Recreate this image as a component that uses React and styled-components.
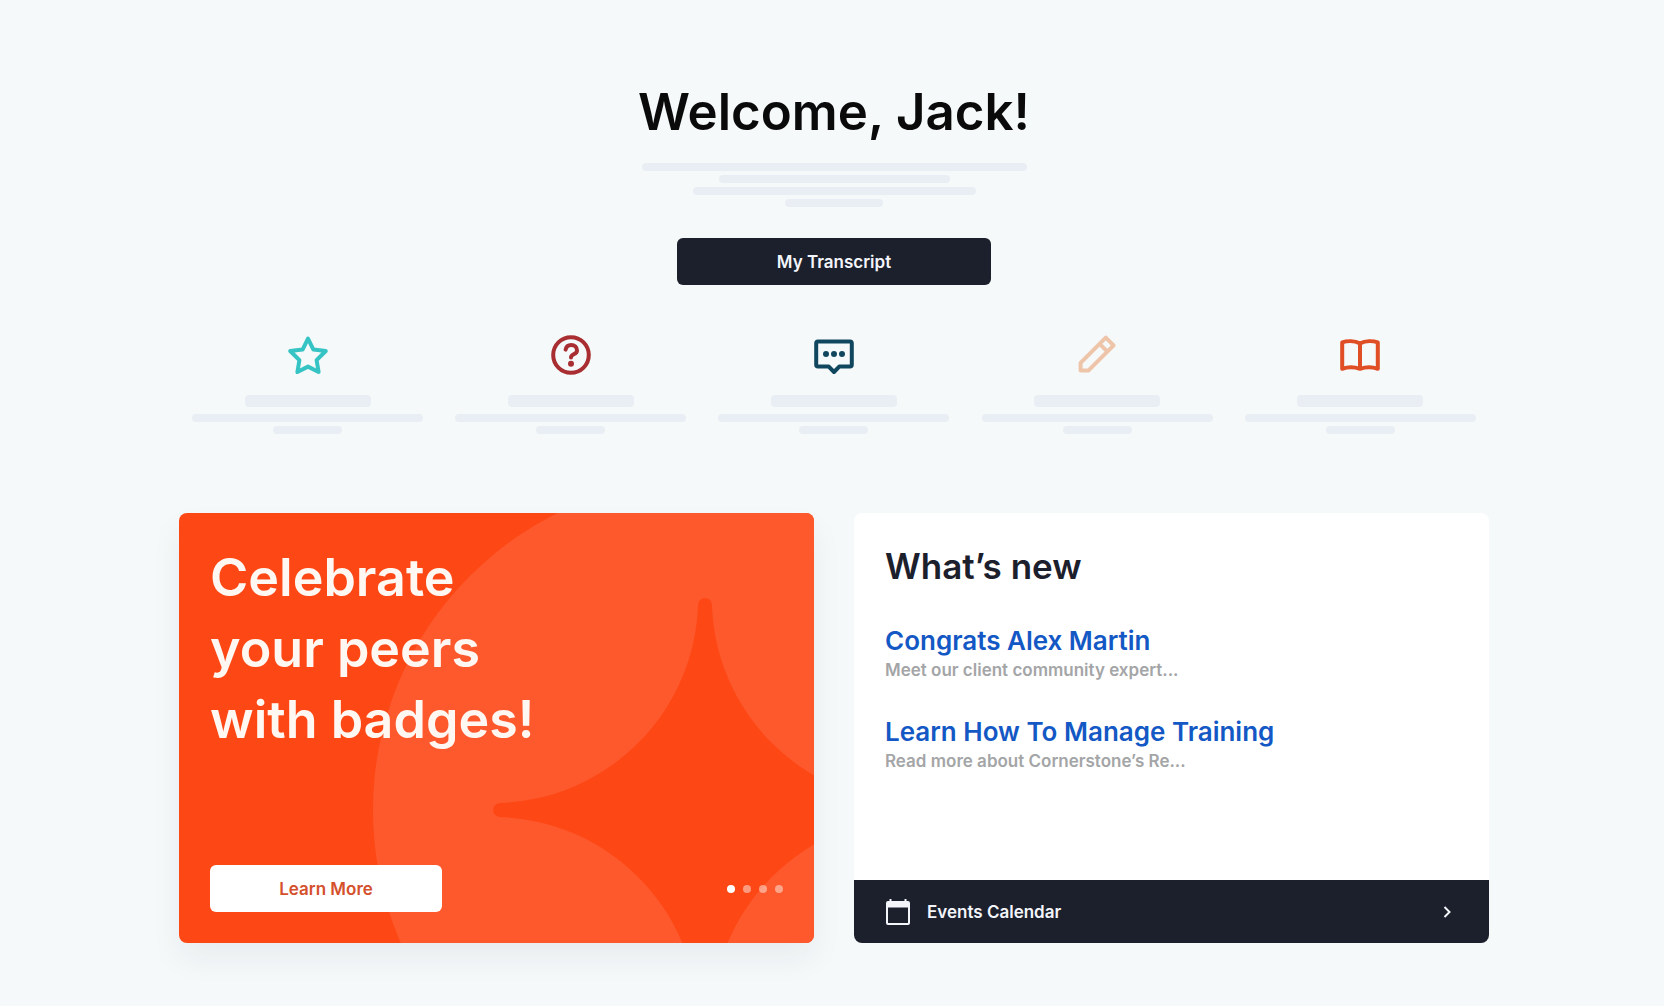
import React from 'react';
import styled, { createGlobalStyle } from 'styled-components';

const shortcuts = [
  {
    name: 'Favorites',
    color: '#35c4c3',
    icon: (
      <path d="M12 3.8L14.7 9.3L20.9 10L16.3 14.6L17.3 20.5L12 17.8L6.7 20.5L7.7 14.6L3.1 10L9.3 9.3Z" />
    ),
  },
  {
    name: 'Help',
    color: '#a82e31',
    icon: (
      <>
        <circle cx="12" cy="12" r="8.9" />
        <path d="M9.3 9.3C9.6 7.8 10.7 7 12.1 7C13.8 7 15 8.1 15 9.7C15 11.8 12 11.5 12 13.2" />
        <circle className="dot" cx="12" cy="16.4" r="1.5" />
      </>
    ),
  },
  {
    name: 'Messages',
    color: '#11475e',
    icon: (
      <>
        <path d="M4 5.2H20Q20.9 5.2 20.9 6.1V16.9Q20.9 17.8 20 17.8H14.6L12 20.5L9.4 17.8H4Q3.1 17.8 3.1 16.9V6.1Q3.1 5.2 4 5.2Z" />
        <circle className="dot" cx="8" cy="11.5" r="1.5" />
        <circle className="dot" cx="12" cy="11.5" r="1.5" />
        <circle className="dot" cx="16" cy="11.5" r="1.5" />
      </>
    ),
  },
  {
    name: 'Notes',
    color: '#eec5a9',
    icon: (
      <path d="M3.8 15.9L16.4 3.3L20.3 7.2L7.8 19.7H3.8ZM13.3 6.4L17.2 10.3" />
    ),
  },
  {
    name: 'Library',
    color: '#e04e26',
    icon: (
      <path d="M3.1 5.7C5.6 4.9 9.4 4.9 12 6.2C14.6 4.9 18.4 4.9 20.9 5.7V18.9C18 17.9 15 17.9 12 18.9C9 17.9 6 17.9 3.1 18.9ZM12 6.2V18.9" />
    ),
  },
];

const news = [
  { title: 'Congrats Alex Martin', text: 'Meet our client community expert...' },
  {
    title: 'Learn How To Manage Training',
    text: 'Read more about Cornerstone’s Re...',
  },
];

const App = () => {
  return (
    <>
      <GlobalStyle />
      <Page>
        <Hero>
          <HeroTitle>Welcome, Jack!</HeroTitle>
          <Lines>
            <Bar $width={385} />
            <Bar $width={231} />
            <Bar $width={283} />
            <Bar $width={98} />
          </Lines>
          <Button $width={314}>My Transcript</Button>
        </Hero>

        <Shortcuts>
          {shortcuts.map(item => (
            <Shortcut key={item.name} href="#" aria-label={item.name}>
              <ShortcutIcon viewBox="0 0 24 24" $color={item.color}>
                {item.icon}
              </ShortcutIcon>
              <Bar $width={126} $height={12} />
              <Lines>
                <Bar $width={231} />
                <Bar $width={69} />
              </Lines>
            </Shortcut>
          ))}
        </Shortcuts>

        <Cards>
          <Banner>
            <BannerArt viewBox="0 0 635 430" preserveAspectRatio="xMaxYMax slice">
              <circle cx="525" cy="297" r="331" fill="#fe592d" />
              <path
                transform="translate(526 297)"
                fill="#fd4816"
                d="M-7 -205A7 7 0 0 1 7 -205A205 205 0 0 0 205 -7A7 7 0 0 1 205 7A205 205 0 0 0 7 205A7 7 0 0 1 -7 205A205 205 0 0 0 -205 7A7 7 0 0 1 -205 -7A205 205 0 0 0 -7 -205Z"
              />
            </BannerArt>
            <BannerTitle>
              Celebrate
              <br />
              your peers
              <br />
              with badges!
            </BannerTitle>
            <BannerFooter>
              <Button $light $width={232}>
                Learn More
              </Button>
              <Dots>
                <Dot $active aria-label="Slide 1" />
                <Dot aria-label="Slide 2" />
                <Dot aria-label="Slide 3" />
                <Dot aria-label="Slide 4" />
              </Dots>
            </BannerFooter>
          </Banner>

          <News>
            <NewsBody>
              <NewsTitle>What’s new</NewsTitle>
              {news.map(item => (
                <NewsItem key={item.title}>
                  <NewsLink href="#">{item.title}</NewsLink>
                  <NewsText>{item.text}</NewsText>
                </NewsItem>
              ))}
            </NewsBody>
            <EventsLink href="#">
              <CalendarIcon viewBox="0 0 24 26">
                <path
                  fillRule="evenodd"
                  d="M3.5 0H5.5V2H18.5V0H20.5V2H22Q24 2 24 4V24Q24 26 22 26H2Q0 26 0 24V4Q0 2 2 2H3.5ZM2 8.5V24H22V8.5Z"
                />
              </CalendarIcon>
              Events Calendar
              <Chevron viewBox="0 0 8 12">
                <path d="M1.5 1L6.5 6L1.5 11" />
              </Chevron>
            </EventsLink>
          </News>
        </Cards>
      </Page>
    </>
  );
};

const GlobalStyle = createGlobalStyle`
  * {
    box-sizing: border-box;
  }
  body {
    margin: 0;
    background: #f5f9fa;
    color: #1c202c;
    font-family: Inter, 'Liberation Sans', sans-serif;
  }
  h1, h2, p {
    margin: 0;
  }
  a {
    text-decoration: none;
  }
`;

const Page = styled.main`
  padding: 80px 175px 60px 179px;
`;

const Hero = styled.header`
  display: flex;
  flex-direction: column;
  align-items: center;
`;

const HeroTitle = styled.h1`
  margin-bottom: 19px;
  color: #0a0a0b;
  font-size: 51px;
  font-weight: 600;
  line-height: 64px;
`;

const Lines = styled.div`
  display: flex;
  flex-direction: column;
  align-items: center;
  gap: 4px;
  width: 100%;
`;

const Bar = styled.div`
  width: ${props => props.$width}px;
  max-width: 100%;
  height: ${props => props.$height || 8}px;
  border-radius: 4px;
  background: #e9eef4;
`;

const Button = styled.button`
  width: ${props => props.$width}px;
  height: 47px;
  border: 0;
  border-radius: 6px;
  background: ${props => (props.$light ? '#fff' : '#1c202c')};
  color: ${props => (props.$light ? '#d5502c' : '#f3f5fb')};
  font-family: inherit;
  font-size: 17px;
  font-weight: 600;
  cursor: pointer;

  ${Hero} & {
    margin-top: 31px;
  }
`;

const Shortcuts = styled.nav`
  display: grid;
  grid-template-columns: repeat(5, 1fr);
  gap: 32px;
  margin: 46px 13px 0;
`;

const Shortcut = styled.a`
  display: flex;
  flex-direction: column;
  align-items: center;
  gap: 7px;
`;

const ShortcutIcon = styled.svg`
  width: 48px;
  height: 48px;
  margin-bottom: 9px;
  fill: none;
  stroke: ${props => props.$color};
  stroke-width: 2;
  stroke-linecap: round;
  stroke-linejoin: round;

  .dot {
    fill: ${props => props.$color};
    stroke: none;
  }
`;

const Cards = styled.section`
  display: grid;
  grid-template-columns: 1fr 1fr;
  gap: 40px;
  margin-top: 79px;
`;

const Banner = styled.article`
  position: relative;
  display: flex;
  flex-direction: column;
  justify-content: space-between;
  min-height: 430px;
  padding: 29px 31px 31px;
  overflow: hidden;
  border-radius: 8px;
  background: #fd4816;
  box-shadow: 0 16px 32px rgba(28, 32, 44, 0.06);
`;

const BannerArt = styled.svg`
  position: absolute;
  inset: 0;
  width: 100%;
  height: 100%;
`;

const BannerTitle = styled.h2`
  position: relative;
  color: #fff8f2;
  font-size: 52px;
  font-weight: 600;
  line-height: 71px;
`;

const BannerFooter = styled.div`
  position: relative;
  display: flex;
  align-items: center;
  justify-content: space-between;
`;

const Dots = styled.div`
  display: flex;
  gap: 8px;
`;

const Dot = styled.button`
  width: 8px;
  height: 8px;
  padding: 0;
  border: 0;
  border-radius: 50%;
  background: ${props => (props.$active ? '#fff' : 'rgba(255, 255, 255, 0.45)')};
`;

const News = styled.article`
  display: flex;
  flex-direction: column;
  overflow: hidden;
  border-radius: 8px;
  background: #fff;
`;

const NewsBody = styled.div`
  flex: 1;
  padding: 31px;
`;

const NewsTitle = styled.h2`
  margin-bottom: 36px;
  font-size: 35px;
  font-weight: 600;
  line-height: 44px;
`;

const NewsItem = styled.div`
  margin-bottom: 32px;
`;

const NewsLink = styled.a`
  display: block;
  color: #1358c4;
  font-size: 26px;
  font-weight: 600;
  line-height: 33px;
`;

const NewsText = styled.p`
  color: #a4a5a7;
  font-size: 17px;
  font-weight: 600;
  line-height: 26px;
`;

const EventsLink = styled.a`
  display: flex;
  align-items: center;
  height: 63px;
  padding: 0 38px 0 32px;
  background: #1c202c;
  color: #f3f5fb;
  font-size: 17px;
  font-weight: 600;
`;

const CalendarIcon = styled.svg`
  width: 24px;
  height: 26px;
  margin-right: 17px;
  fill: #f3f5fb;
`;

const Chevron = styled.svg`
  width: 8px;
  height: 12px;
  margin-left: auto;
  fill: none;
  stroke: #f3f5fb;
  stroke-width: 2;
`;

export default App;
